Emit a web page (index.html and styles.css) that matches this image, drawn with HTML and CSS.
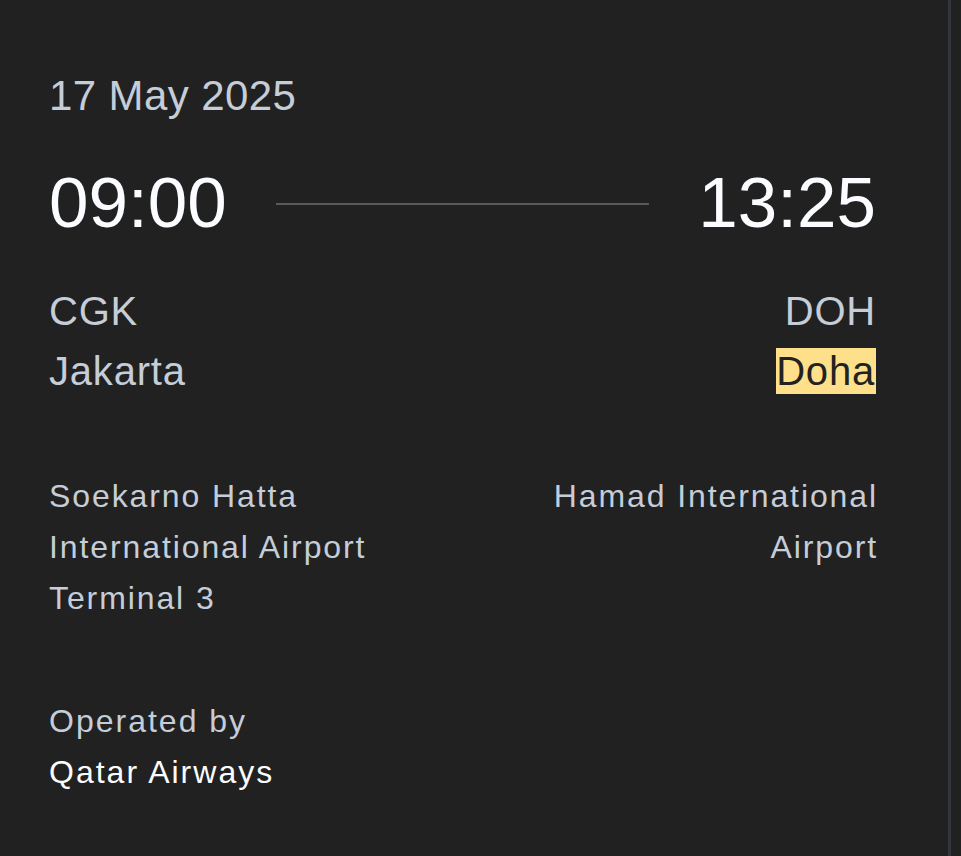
FILE: index.html
```html
<!DOCTYPE html>
<html lang="en">
<head>
<meta charset="utf-8">
<title>Flight</title>
<link rel="stylesheet" href="styles.css">
</head>
<body>
<div class="panel">
  <div class="date">17 May 2025</div>
  <div class="times">
    <div class="time">09:00</div>
    <div class="line"></div>
    <div class="time">13:25</div>
  </div>
  <div class="places">
    <div class="place">
      <div class="code">CGK</div>
      <div class="city">Jakarta</div>
    </div>
    <div class="place right">
      <div class="code">DOH</div>
      <div class="city"><mark class="hl">Doha</mark></div>
    </div>
  </div>
  <div class="airports">
    <div class="airport">Soekarno Hatta<br>International Airport<br>Terminal 3</div>
    <div class="airport right">Hamad International<br>Airport</div>
  </div>
  <div class="operator">
    <div class="op-label">Operated by</div>
    <div class="op-name">Qatar Airways</div>
  </div>
</div>
</body>
</html>
```

FILE: styles.css
```css
html, body {
  margin: 0;
  padding: 0;
  background: #212121;
  height: 100%;
}
body {
  font-family: "Liberation Sans", Arial, sans-serif;
  color: #c5cdd8;
}
.panel {
  width: 951px;
  min-height: 856px;
  box-sizing: border-box;
  padding: 64px 72px 0 49px;
  border-right: 3px solid #33363d;
}
.date {
  font-size: 42px;
  line-height: 63px;
  letter-spacing: 0.4px;
}
.times {
  display: flex;
  align-items: center;
  margin-top: 36px;
}
.time {
  font-size: 71px;
  line-height: 80px;
  color: #fafcff;
}
.line {
  flex: 1;
  height: 2px;
  background: #5a5a5a;
  margin: 0 49px;
  position: relative;
  top: 1px;
}
.places {
  display: flex;
  justify-content: space-between;
  margin-top: 38px;
}
.place {
  font-size: 40px;
  line-height: 60px;
  letter-spacing: 0.8px;
}
.right {
  text-align: right;
}
.hl {
  background: #ffe08a;
  color: #222;
  padding: 1px 1px 1px 0;
}
.airports {
  display: flex;
  justify-content: space-between;
  margin-top: 70px;
}
.airport {
  font-size: 32px;
  line-height: 51px;
  letter-spacing: 1.9px;
}
.airport.right {
  margin-right: -2px;
}
.operator {
  margin-top: 72px;
  font-size: 32px;
  line-height: 51px;
  letter-spacing: 2px;
}
.op-name {
  color: #fafcff;
}
```
